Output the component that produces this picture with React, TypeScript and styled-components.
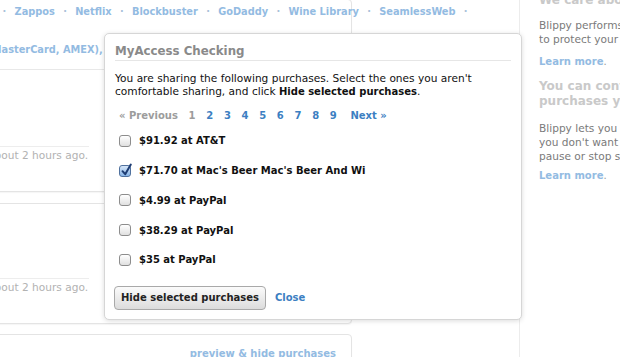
import React from "react";
import styled, { createGlobalStyle } from "styled-components";

const Global = createGlobalStyle`
  html, body { margin: 0; padding: 0; background: #fff; overflow: hidden; }
  body { font-family: "DejaVu Sans", Verdana, sans-serif; }
`;

const Page = styled.div`
  position: relative;
  width: 620px;
  height: 357px;
  overflow: hidden;
  display: grid;
  grid-template-columns: 520px 1fr;
  font-family: "DejaVu Sans", Verdana, sans-serif;
  font-size: 10.6px;
  color: #222;
`;

const Main = styled.div`
  border-right: 1px solid #ececec;
  min-width: 0;
`;

const Feed = styled.div`
  margin: -1px 0 0 -60px;
  width: 412px;
  display: flex;
  flex-direction: column;
`;

const Card = styled.div<{ $mt?: number }>`
  box-sizing: border-box;
  background: #fff;
  border: 1px solid #e4e4e4;
  border-radius: 4px;
  box-shadow: 0 1px 1px rgba(0, 0, 0, 0.04);
  padding: 0 15px 29px 16px;
  margin-top: ${(p) => p.$mt ?? 0}px;
`;

const ActionCard = styled(Card)`
  padding: 12px 15px 12px 16px;
  display: flex;
  justify-content: flex-end;
`;

const Header = styled.div`
  padding: 5px 0 12px;
  border-bottom: 1px solid #e8e8e8;
`;

const LinkRow = styled.div`
  display: flex;
  white-space: nowrap;
  line-height: 14px;
  font-size: 9.8px;
  font-weight: bold;
  margin-left: 2px;
`;

const FadedLink = styled.span`
  color: #93bbe2;
`;

const Dot = styled.span`
  color: #a9c2da;
  margin: 0 8.3px;
`;

const CardsLine = styled.div`
  margin-top: 24px;
  line-height: 14px;
  font-size: 9.8px;
  font-weight: bold;
  color: #93bbe2;
  white-space: nowrap;
`;

const Body = styled.div<{ $h: number }>`
  height: ${(p) => p.$h}px;
`;

const Footer = styled.div`
  display: inline-block;
  margin-left: 31px;
  padding: 1px 1px 0 0;
  border-top: 1px solid #ededed;
  line-height: 14px;
  color: #b2b2b2;
  white-space: nowrap;
`;

const Side = styled.aside`
  padding-left: 19px;
  white-space: nowrap;
  overflow: hidden;
  min-width: 0;
`;

const SideHeading = styled.div<{ $mt: number }>`
  margin-top: ${(p) => p.$mt}px;
  font-size: 12px;
  font-weight: bold;
  line-height: 15px;
  color: #c9c9c9;
`;

const SideText = styled.div<{ $mt: number }>`
  margin-top: ${(p) => p.$mt}px;
  line-height: 14px;
  color: #7a7a7a;
`;

const LearnMore = styled.div<{ $mt: number }>`
  margin-top: ${(p) => p.$mt}px;
  line-height: 14px;
  font-size: 10px;
  font-weight: bold;
  color: #93bbe2;
  span { color: #999; font-weight: normal; }
`;

const Popup = styled.div`
  position: absolute;
  left: 104px;
  top: 33px;
  width: 418px;
  height: 287px;
  box-sizing: border-box;
  background: #fff;
  border: 1px solid #d6d6d6;
  border-radius: 5px;
  box-shadow: 0 1px 5px rgba(0, 0, 0, 0.14);
  padding: 0 10px;
`;

const Title = styled.div`
  padding: 9px 0 1px;
  border-bottom: 1px solid #e6e6e6;
  font-size: 11.8px;
  font-weight: bold;
  line-height: 16px;
  color: #8a8a8a;
`;

const Intro = styled.p`
  margin: 11px 0 0;
  line-height: 13px;
  color: #111;
  b { font-size: 10px; }
`;

const Pager = styled.div`
  margin: 11px 0 0 4px;
  display: flex;
  gap: 10.7px;
  line-height: 14px;
  font-size: 10px;
  font-weight: bold;
`;

const PageItem = styled.span<{ $off?: boolean; $extra?: number }>`
  color: ${(p) => (p.$off ? "#9c9c9c" : "#3c7fc2")};
  margin-left: ${(p) => p.$extra ?? 0}px;
`;

const List = styled.div`
  margin-top: 3px;
  display: flex;
  flex-direction: column;
`;

const Row = styled.label`
  height: 29.75px;
  display: flex;
  align-items: center;
  gap: 8px;
  padding-left: 4px;
  font-size: 10px;
  font-weight: bold;
  color: #111;
  white-space: nowrap;
`;

const Box = styled.span<{ $checked?: boolean }>`
  position: relative;
  flex: none;
  width: 12px;
  height: 12px;
  box-sizing: border-box;
  border-radius: 3px;
  border: 1px solid ${(p) => (p.$checked ? "#50719e" : "#8d8d8d")};
  background: ${(p) =>
    p.$checked
      ? "linear-gradient(#d6e6f8, #86b3e6)"
      : "linear-gradient(#ffffff, #e0e0e0)"};
  svg {
    position: absolute;
    left: 0px;
    top: -3px;
  }
`;

const Actions = styled.div`
  margin-top: 11px;
  display: flex;
  align-items: center;
  gap: 9px;
`;

const Button = styled.button`
  margin-left: -1px;
  height: 24px;
  padding: 0 6px;
  border: 1px solid #a9a9a9;
  border-radius: 4px;
  background: linear-gradient(#fbfbfb, #dcdcdc);
  font-family: "DejaVu Sans", Verdana, sans-serif;
  font-size: 10px;
  font-weight: bold;
  color: #222;
`;

const CloseLink = styled.span`
  font-size: 10px;
  font-weight: bold;
  color: #3c7fc2;
`;

const PreviewLink = styled.span`
  line-height: 14px;
  font-size: 10px;
  font-weight: bold;
  color: #93bbe2;
`;

const merchants = ["Target", "Zappos", "Netflix", "Blockbuster", "GoDaddy", "Wine Library", "SeamlessWeb"];

const purchases = [
  { label: "$91.92 at AT&T", checked: false },
  { label: "$71.70 at Mac's Beer Mac's Beer And Wi", checked: true },
  { label: "$4.99 at PayPal", checked: false },
  { label: "$38.29 at PayPal", checked: false },
  { label: "$35 at PayPal", checked: false },
];

const Check = ({ checked }: { checked: boolean }) => (
  <Box $checked={checked}>
    {checked && (
      <svg width="13" height="14" viewBox="0 0 13 14">
        <path d="M2.5 8.2 L5.2 11.2 L10.8 1.5" fill="none" stroke="#1d3c73" strokeWidth="2" strokeLinecap="round" strokeLinejoin="round" />
      </svg>
    )}
  </Box>
);

export default function App() {
  return (
    <>
      <Global />
      <Page>
        <Main>
          <Feed>
            <Card>
              <Header>
                <LinkRow>
                  {merchants.map((m, i) => (
                    <React.Fragment key={m}>
                      {i > 0 && <Dot>·</Dot>}
                      <FadedLink>{m}</FadedLink>
                    </React.Fragment>
                  ))}
                  <Dot>·</Dot>
                </LinkRow>
                <CardsLine>(Visa, MasterCard, AMEX),</CardsLine>
              </Header>
              <Body $h={76} />
              <Footer>about 2 hours ago.</Footer>
            </Card>
            <Card $mt={11}>
              <Body $h={74} />
              <Footer>about 2 hours ago.</Footer>
            </Card>
            <ActionCard $mt={10}>
              <PreviewLink>preview &amp; hide purchases</PreviewLink>
            </ActionCard>
          </Feed>
        </Main>
        <Side>
          <SideHeading $mt={-7}>We care about your security</SideHeading>
          <SideText $mt={10}>
            Blippy performs regular audits
            <br />
            to protect your information.
          </SideText>
          <LearnMore $mt={9}>
            Learn more<span>.</span>
          </LearnMore>
          <SideHeading $mt={9.5}>
            You can control which
            <br />
            purchases you share
          </SideHeading>
          <SideText $mt={12.5}>
            Blippy lets you hide purchases
            <br />
            you don't want to share, or
            <br />
            pause or stop sharing at any time.
          </SideText>
          <LearnMore $mt={6}>
            Learn more<span>.</span>
          </LearnMore>
        </Side>
        <Popup>
          <Title>MyAccess Checking</Title>
          <Intro>
            You are sharing the following purchases. Select the ones you aren't comfortable sharing, and click{" "}
            <b>Hide selected purchases</b>.
          </Intro>
          <Pager>
            <PageItem $off>« Previous</PageItem>
            <PageItem $off>1</PageItem>
            {[2, 3, 4, 5, 6, 7, 8, 9].map((n) => (
              <PageItem key={n}>{n}</PageItem>
            ))}
            <PageItem $extra={3}>Next »</PageItem>
          </Pager>
          <List>
            {purchases.map((p) => (
              <Row key={p.label}>
                <Check checked={p.checked} />
                {p.label}
              </Row>
            ))}
          </List>
          <Actions>
            <Button>Hide selected purchases</Button>
            <CloseLink>Close</CloseLink>
          </Actions>
        </Popup>
      </Page>
    </>
  );
}
